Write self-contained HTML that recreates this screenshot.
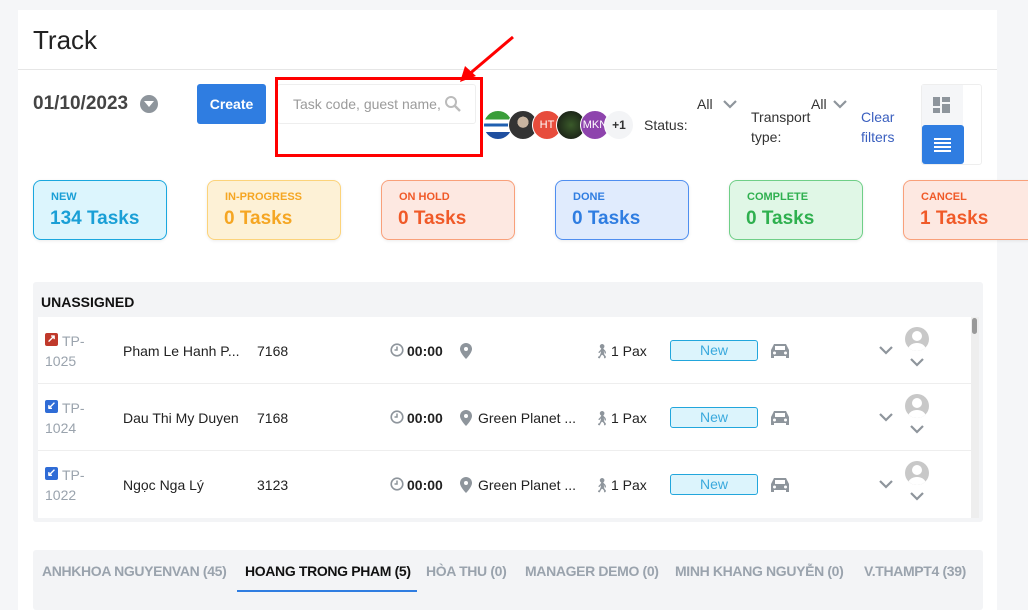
<!DOCTYPE html>
<html><head><meta charset="utf-8"><style>
*{margin:0;padding:0;box-sizing:border-box}
body{width:1028px;height:601px;overflow:hidden;background:#f5f6f8;font-family:"Liberation Sans",sans-serif;position:relative;color:#222}
.a{position:absolute;white-space:nowrap}
.panel{position:absolute;left:18px;top:10px;width:979px;height:600px;background:#fff}
.card{position:absolute;top:180px;width:134px;height:60px;border-radius:8px;border:1px solid;box-shadow:0 1px 3px rgba(0,0,0,.08)}
.card .l{position:absolute;left:17px;top:10px;font-size:11px;font-weight:bold}
.card .n{position:absolute;left:16px;top:27px;font-size:19px;font-weight:bold}
.row{position:absolute;left:38px;width:933px;height:67px;background:#fff;border-bottom:1px solid #eee;font-size:14px;color:#222}
.row .a{top:26px}
.badge{position:absolute;left:632px;top:23px;width:88px;height:21px;border:1px solid #22a6dc;background:#dcf4fc;border-radius:3px;color:#3aa9dd;font-size:14px;text-align:center;line-height:19px}
.av{position:absolute;top:110px;width:30px;height:30px;border-radius:50%;border:1px solid #fff;color:#fff;font-size:11px;text-align:center;line-height:28px}
.tab{position:absolute;top:563px;font-family:"Liberation Sans Narrow","Liberation Sans",sans-serif;font-weight:bold;font-size:14px;color:#9aa3ad;letter-spacing:-0.35px}
</style></head><body>
<div class="panel"></div>
<div style="position:absolute;left:997px;top:0;width:31px;height:601px;background:#f5f6f8"></div>
<div class="a" style="left:33px;top:25px;font-size:26px;color:#222">Track</div>
<div style="position:absolute;left:18px;top:69px;width:979px;height:1px;background:#e6e6e6"></div>

<div class="a" style="left:33px;top:93px;font-size:19px;font-weight:bold;color:#444">01/10/2023</div>
<div style="position:absolute;left:140px;top:95px;width:18px;height:18px;border-radius:50%;background:#8e959c"></div>
<div style="position:absolute;left:144px;top:101px;width:0;height:0;border-left:5px solid transparent;border-right:5px solid transparent;border-top:6px solid #fff"></div>
<div class="a" style="left:197px;top:84px;width:69px;height:40px;background:#2f7de1;border-radius:3px;color:#fff;font-weight:bold;font-size:14px;text-align:center;line-height:40px">Create</div>
<div class="a" style="left:277px;top:84px;width:199px;height:40px;border:1px solid #eee;border-radius:3px"></div>
<div class="a" style="left:293px;top:96px;font-size:14px;color:#9b9b9b">Task code, guest name,</div>
<svg class="a" style="left:444px;top:95px" width="18" height="18" viewBox="0 0 18 18"><circle cx="7" cy="7" r="5" fill="none" stroke="#bbb" stroke-width="2"/><path d="M11 11l5 5" stroke="#bbb" stroke-width="2.4"/></svg>
<div class="a" style="left:275px;top:77px;width:208px;height:80px;border:3px solid #f00"></div>
<svg class="a" style="left:455px;top:33px" width="62" height="52"><path d="M58 4L12 43" stroke="#f00" stroke-width="3"/><path d="M5 49L10 33L21 43Z" fill="#f00"/></svg>

<div class="av" style="left:483px;background:linear-gradient(#3a9e3a 0 30%,#fff 30% 45%,#1f5fb0 45% 55%,#fff 55% 75%,#1f4fa0 75%)"></div>
<div class="av" style="left:508px;background:radial-gradient(circle at 50% 40%,#c8b4a0 0 25%,#333 26%)"></div>
<div class="av" style="left:532px;background:#e74c3c">HT</div>
<div class="av" style="left:556px;background:radial-gradient(#3a5a2a,#111)"></div>
<div class="av" style="left:580px;background:#8e44ad">MKN</div>
<div class="av" style="left:604px;background:#f3f4f6;color:#333;font-weight:bold;font-size:12px">+1</div>

<div class="a" style="left:644px;top:117px;font-size:14px;color:#333">Status:</div>
<div class="a" style="left:697px;top:96px;font-size:14px;color:#333">All</div>
<svg class="a" style="left:723px;top:99px" width="14" height="10"><path d="M1 2l6 6 6-6" fill="none" stroke="#8e959c" stroke-width="2.2"/></svg>
<div class="a" style="left:751px;top:107px;font-size:14px;color:#333;line-height:20px">Transport<br>type:</div>
<div class="a" style="left:811px;top:96px;font-size:14px;color:#333">All</div>
<svg class="a" style="left:833px;top:99px" width="14" height="10"><path d="M1 2l6 6 6-6" fill="none" stroke="#8e959c" stroke-width="2.2"/></svg>
<div class="a" style="left:861px;top:107px;font-size:14px;color:#3a5fbf;line-height:20px">Clear<br>filters</div>
<div class="a" style="left:921px;top:84px;width:61px;height:81px;border:1px solid #eee;border-radius:3px"></div>
<div class="a" style="left:922px;top:85px;width:41px;height:40px;background:#f5f6f8"></div>
<svg class="a" style="left:933px;top:97px" width="18" height="16"><rect x="0" y="0" width="7" height="9" fill="#8e959c"/><rect x="9" y="0" width="8" height="5" fill="#8e959c"/><rect x="0" y="11" width="7" height="5" fill="#8e959c"/><rect x="9" y="7" width="8" height="9" fill="#8e959c"/></svg>
<div class="a" style="left:922px;top:125px;width:42px;height:39px;background:#2f7de1;border-radius:3px"></div>
<svg class="a" style="left:934px;top:138px" width="18" height="14"><path d="M0 1h17M0 5h17M0 9h17M0 13h17" stroke="#fff" stroke-width="2"/></svg>

<div class="card" style="left:33px;border-color:#1aa7de;background:#dcf5fd;color:#1a9fd6"><div class="l">NEW</div><div class="n">134 Tasks</div></div>
<div class="card" style="left:207px;border-color:#fcd37a;background:#fdf1d6;color:#f5a623"><div class="l">IN-PROGRESS</div><div class="n">0 Tasks</div></div>
<div class="card" style="left:381px;border-color:#f9a07a;background:#fde8e1;color:#f05a28"><div class="l">ON HOLD</div><div class="n">0 Tasks</div></div>
<div class="card" style="left:555px;border-color:#4f8ef0;background:#e0ebfd;color:#2f7de1"><div class="l">DONE</div><div class="n">0 Tasks</div></div>
<div class="card" style="left:729px;border-color:#6fcf87;background:#e0f7e6;color:#2fb04f"><div class="l">COMPLETE</div><div class="n">0 Tasks</div></div>
<div class="card" style="left:903px;width:140px;border-color:#f9a07a;background:#fde8e1;color:#f05a28"><div class="l">CANCEL</div><div class="n">1 Tasks</div></div>

<div class="a" style="left:33px;top:282px;width:950px;height:240px;background:#f3f4f6;border-radius:3px"></div>
<div class="a" style="left:41px;top:294px;font-size:14px;font-weight:bold;color:#111">UNASSIGNED</div>
<div class="a" style="left:971px;top:317px;width:8px;height:201px;background:#eee"></div>
<div class="a" style="left:972px;top:318px;width:5px;height:16px;background:#999;border-radius:3px"></div>

<!-- rows -->
<div class="row" style="top:317px">
<div class="a" style="left:7px;top:16px;width:13px;height:13px;background:#c0392b;border-radius:2px;color:#fff;font-size:11px;line-height:13px;text-align:center;font-weight:bold">↗</div>
<div class="a" style="left:24px;top:14px;color:#9aa3ad;line-height:20px">TP-<br><span style="margin-left:-17px">1025</span></div>
<div class="a" style="left:85px">Pham Le Hanh P...</div><div class="a" style="left:219px">7168</div>
<svg class="a" style="left:352px;top:26px" width="14" height="14"><circle cx="7" cy="7" r="5.8" fill="none" stroke="#8e959c" stroke-width="1.6"/><path d="M7 3.5V7H4.5" fill="none" stroke="#8e959c" stroke-width="1.5"/></svg><div class="a" style="left:369px;font-weight:bold">00:00</div>
<svg class="a" style="left:422px;top:26px" width="12" height="16"><path d="M6 0a6 6 0 0 1 6 6c0 4-6 10-6 10S0 10 0 6a6 6 0 0 1 6-6z" fill="#8e959c"/><circle cx="6" cy="6" r="2" fill="#fff"/></svg>
<div class="a" style="left:555px;color:#8e959c">🚶︎</div><div class="a" style="left:573px">1 Pax</div>
<div class="badge">New</div>
<svg class="a" style="left:733px;top:26px" width="18" height="15"><path d="M3 1h12l3 6v8h-3v-2H3v2H0V7z" fill="#8e959c"/><rect x="4" y="3" width="10" height="4" fill="#fff"/><circle cx="3.5" cy="10" r="1.5" fill="#fff"/><circle cx="14.5" cy="10" r="1.5" fill="#fff"/></svg>
<svg class="a" style="left:841px;top:28px" width="14" height="10"><path d="M1 2l6 6 6-6" fill="none" stroke="#8e959c" stroke-width="2.2"/></svg>
<div class="a" style="left:867px;top:10px;width:24px;height:24px;border-radius:50%;background:#c8c8c8;overflow:hidden"><div style="position:absolute;left:7px;top:4px;width:10px;height:10px;border-radius:50%;background:#fff"></div><div style="position:absolute;left:3px;top:16px;width:18px;height:14px;border-radius:50%;background:#fff"></div></div>
<svg class="a" style="left:872px;top:40px" width="14" height="10"><path d="M1 2l6 6 6-6" fill="none" stroke="#8e959c" stroke-width="2.2"/></svg>
</div>

<div class="row" style="top:384px">
<div class="a" style="left:7px;top:16px;width:13px;height:13px;background:#2f6cd6;border-radius:2px;color:#fff;font-size:11px;line-height:13px;text-align:center;font-weight:bold">↙</div>
<div class="a" style="left:24px;top:14px;color:#9aa3ad;line-height:20px">TP-<br><span style="margin-left:-17px">1024</span></div>
<div class="a" style="left:85px">Dau Thi My Duyen</div><div class="a" style="left:219px">7168</div>
<svg class="a" style="left:352px;top:26px" width="14" height="14"><circle cx="7" cy="7" r="5.8" fill="none" stroke="#8e959c" stroke-width="1.6"/><path d="M7 3.5V7H4.5" fill="none" stroke="#8e959c" stroke-width="1.5"/></svg><div class="a" style="left:369px;font-weight:bold">00:00</div>
<svg class="a" style="left:422px;top:26px" width="12" height="16"><path d="M6 0a6 6 0 0 1 6 6c0 4-6 10-6 10S0 10 0 6a6 6 0 0 1 6-6z" fill="#8e959c"/><circle cx="6" cy="6" r="2" fill="#fff"/></svg>
<div class="a" style="left:440px">Green Planet ...</div>
<div class="a" style="left:555px;color:#8e959c">🚶︎</div><div class="a" style="left:573px">1 Pax</div>
<div class="badge">New</div>
<svg class="a" style="left:733px;top:26px" width="18" height="15"><path d="M3 1h12l3 6v8h-3v-2H3v2H0V7z" fill="#8e959c"/><rect x="4" y="3" width="10" height="4" fill="#fff"/><circle cx="3.5" cy="10" r="1.5" fill="#fff"/><circle cx="14.5" cy="10" r="1.5" fill="#fff"/></svg>
<svg class="a" style="left:841px;top:28px" width="14" height="10"><path d="M1 2l6 6 6-6" fill="none" stroke="#8e959c" stroke-width="2.2"/></svg>
<div class="a" style="left:867px;top:10px;width:24px;height:24px;border-radius:50%;background:#c8c8c8;overflow:hidden"><div style="position:absolute;left:7px;top:4px;width:10px;height:10px;border-radius:50%;background:#fff"></div><div style="position:absolute;left:3px;top:16px;width:18px;height:14px;border-radius:50%;background:#fff"></div></div>
<svg class="a" style="left:872px;top:40px" width="14" height="10"><path d="M1 2l6 6 6-6" fill="none" stroke="#8e959c" stroke-width="2.2"/></svg>
</div>

<div class="row" style="top:451px;height:67px;border-bottom:none">
<div class="a" style="left:7px;top:16px;width:13px;height:13px;background:#2f6cd6;border-radius:2px;color:#fff;font-size:11px;line-height:13px;text-align:center;font-weight:bold">↙</div>
<div class="a" style="left:24px;top:14px;color:#9aa3ad;line-height:20px">TP-<br><span style="margin-left:-17px">1022</span></div>
<div class="a" style="left:85px">Ngọc Nga Lý</div><div class="a" style="left:219px">3123</div>
<svg class="a" style="left:352px;top:26px" width="14" height="14"><circle cx="7" cy="7" r="5.8" fill="none" stroke="#8e959c" stroke-width="1.6"/><path d="M7 3.5V7H4.5" fill="none" stroke="#8e959c" stroke-width="1.5"/></svg><div class="a" style="left:369px;font-weight:bold">00:00</div>
<svg class="a" style="left:422px;top:26px" width="12" height="16"><path d="M6 0a6 6 0 0 1 6 6c0 4-6 10-6 10S0 10 0 6a6 6 0 0 1 6-6z" fill="#8e959c"/><circle cx="6" cy="6" r="2" fill="#fff"/></svg>
<div class="a" style="left:440px">Green Planet ...</div>
<div class="a" style="left:555px;color:#8e959c">🚶︎</div><div class="a" style="left:573px">1 Pax</div>
<div class="badge">New</div>
<svg class="a" style="left:733px;top:26px" width="18" height="15"><path d="M3 1h12l3 6v8h-3v-2H3v2H0V7z" fill="#8e959c"/><rect x="4" y="3" width="10" height="4" fill="#fff"/><circle cx="3.5" cy="10" r="1.5" fill="#fff"/><circle cx="14.5" cy="10" r="1.5" fill="#fff"/></svg>
<svg class="a" style="left:841px;top:28px" width="14" height="10"><path d="M1 2l6 6 6-6" fill="none" stroke="#8e959c" stroke-width="2.2"/></svg>
<div class="a" style="left:867px;top:10px;width:24px;height:24px;border-radius:50%;background:#c8c8c8;overflow:hidden"><div style="position:absolute;left:7px;top:4px;width:10px;height:10px;border-radius:50%;background:#fff"></div><div style="position:absolute;left:3px;top:16px;width:18px;height:14px;border-radius:50%;background:#fff"></div></div>
<svg class="a" style="left:872px;top:40px" width="14" height="10"><path d="M1 2l6 6 6-6" fill="none" stroke="#8e959c" stroke-width="2.2"/></svg>
</div>

<div class="a" style="left:33px;top:550px;width:950px;height:60px;background:#f3f4f6;border-radius:3px"></div>
<div class="tab" style="left:42px">ANHKHOA NGUYENVAN (45)</div>
<div class="tab" style="left:245px;color:#111">HOANG TRONG PHAM (5)</div>
<div class="tab" style="left:426px">HÒA THU (0)</div>
<div class="tab" style="left:525px">MANAGER DEMO (0)</div>
<div class="tab" style="left:675px">MINH KHANG NGUYỄN (0)</div>
<div class="tab" style="left:864px">V.THAMPT4 (39)</div>
<div class="a" style="left:237px;top:590px;width:180px;height:2px;background:#2f7de1"></div>
</body></html>
